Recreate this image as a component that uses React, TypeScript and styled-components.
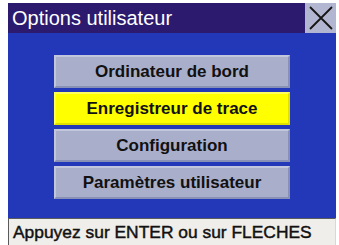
import React from "react";
import styled, { createGlobalStyle } from "styled-components";

const GlobalStyle = createGlobalStyle`
  html, body {
    margin: 0;
    padding: 0;
    background: #ffffff;
  }
  body {
    font-family: "Liberation Sans", Arial, sans-serif;
  }
`;

const items = [
  "Ordinateur de bord",
  "Enregistreur de trace",
  "Configuration",
  "Paramètres utilisateur",
];

const App: React.FC = () => {
  return (
    <>
      <GlobalStyle />
      <Screen>
        <TitleBar>
          <Title>Options utilisateur</Title>
          <CloseButton>
            <svg width="26" height="26" viewBox="0 0 26 26">
              <path d="M2 2 L24 24 M24 2 L2 24" stroke="#151515" strokeWidth="1.8" />
            </svg>
          </CloseButton>
        </TitleBar>
        <Menu>
          {items.map((label, i) => (
            <MenuButton key={label} active={i === 1}>
              {label}
            </MenuButton>
          ))}
        </Menu>
        <StatusBar>Appuyez sur ENTER ou sur FLECHES</StatusBar>
      </Screen>
    </>
  );
};

export default App;

const Screen = styled.div`
  width: 328px;
  height: 242px;
  margin: 3px 3px 0 8px;
  display: flex;
  flex-direction: column;
  background: #2238b8;
`;

const TitleBar = styled.div`
  height: 30px;
  display: flex;
  align-items: stretch;
  background: #2c1a6e;
`;

const Title = styled.div`
  flex: 1;
  color: #ffffff;
  font-size: 20px;
  line-height: 30px;
  padding-left: 4px;
`;

const CloseButton = styled.div`
  width: 31px;
  background: #b3b6d0;
  display: flex;
  align-items: center;
  justify-content: center;
`;

const Menu = styled.div`
  flex: 1;
  display: flex;
  flex-direction: column;
  gap: 4px;
  padding: 22px 46px 0 46px;
`;

const MenuButton = styled.div<{ active?: boolean }>`
  height: 33px;
  box-sizing: border-box;
  display: flex;
  align-items: center;
  justify-content: center;
  font-size: 17px;
  font-weight: bold;
  color: #111111;
  background: ${({ active }) => (active ? "#ffff00" : "#a9aecb")};
  border-top: 2px solid ${({ active }) => (active ? "#ffff5a" : "#c2c6dc")};
  border-left: 2px solid ${({ active }) => (active ? "#ffff5a" : "#c2c6dc")};
  border-bottom: 2px solid ${({ active }) => (active ? "#e0e000" : "#8890b6")};
  border-right: 2px solid ${({ active }) => (active ? "#e0e000" : "#8890b6")};
`;

const StatusBar = styled.div`
  height: 27px;
  box-sizing: border-box;
  background: #efeeea;
  border-top: 1px solid #5a5a5a;
  border-left: 1px solid #5a5a5a;
  border-right: 1px solid #d8d8d8;
  color: #111111;
  font-size: 17.4px;
  line-height: 26px;
  padding-left: 4px;
  white-space: nowrap;
  overflow: hidden;
  -webkit-text-stroke: 0.45px #111111;
`;
